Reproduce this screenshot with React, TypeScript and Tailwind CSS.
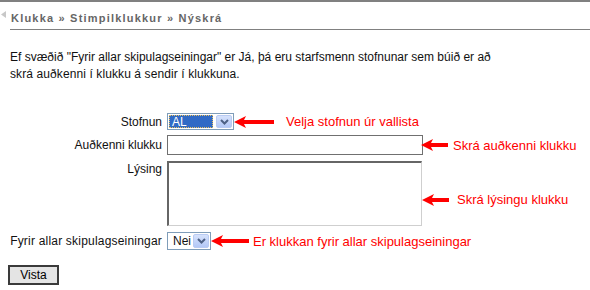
import React from 'react';

const FONT = { fontFamily: '"Liberation Sans", Arial, sans-serif' };

function RedArrow({ width }: { width: number }) {
  return (
    <svg width={width} height={12} viewBox={`0 0 ${width} 12`} className="block shrink-0">
      <polygon points={`0,6 12,0 10,4 ${width},4 ${width},8 10,8 12,12`} fill="#ff0000" />
    </svg>
  );
}

function DropButton() {
  return (
    <div className="flex h-full w-[16px] items-center justify-center rounded-[2px] border border-[#b9cbf3] bg-gradient-to-b from-[#d6e2fc] to-[#b3c8f6]">
      <svg width="9" height="6" viewBox="0 0 9 6">
        <path d="M1 1 L4.5 4.5 L8 1" fill="none" stroke="#4d6185" strokeWidth="2" />
      </svg>
    </div>
  );
}

function Note({ children, ml }: { children: React.ReactNode; ml: string }) {
  return <span className={`${ml} whitespace-nowrap text-[13px] leading-[15px] text-[#ff0000]`}>{children}</span>;
}

export default function App() {
  return (
    <div className="h-[290px] w-[590px] overflow-hidden border-t-2 border-[#808080] bg-white text-[12px] text-[#111]" style={FONT}>
      {/* breadcrumb */}
      <div className="flex">
        <div className="w-[10px] shrink-0 pt-[9px] pl-[1px]">
          <svg width="5" height="7" viewBox="0 0 5 7">
            <polygon points="0,3.5 5,0 5,7" fill="#c8c8c8" />
          </svg>
        </div>
        <div className="flex-1 border-b border-[#808080] pt-[10px] pb-[4px] pl-[1px] text-[11px] font-bold leading-[13px] tracking-[1.2px] text-[#666]">
          Klukka » Stimpilklukkur » Nýskrá
        </div>
      </div>

      <p className="mt-[19px] pl-[10px] leading-[17px]">
        Ef svæðið "Fyrir allar skipulagseiningar" er Já, þá eru starfsmenn stofnunar sem búið er að
        <br />
        <span className="tracking-[0.1px]">skrá auðkenni í klukku á sendir í klukkuna.</span>
      </p>

      <div className="mt-[30px] flex flex-col pl-[10px]">
        {/* Stofnun */}
        <div className="flex h-[17px] items-center">
          <label className="w-[152px] text-right">Stofnun</label>
          <div className="ml-[5px] flex h-[17px] w-[67px] items-center gap-[3px] border border-[#7f9db9] bg-white p-[1px]">
            <div className="flex h-full flex-1 items-center border border-dotted border-[#e8c060] bg-[#316ac5] pl-[2px] text-white">
              AL
            </div>
            <DropButton />
          </div>
          <RedArrow width={40} />
          <Note ml="ml-[12px]">Velja stofnun úr vallista</Note>
        </div>

        {/* Auðkenni klukku */}
        <div className="mt-[5px] flex h-[20px] items-center">
          <label className="w-[152px] text-right">Auðkenni klukku</label>
          <div className="ml-[5px] h-[20px] w-[256px] border border-[#707070] bg-white" />
          <div className="-ml-[2px] flex items-center">
            <RedArrow width={27} />
            <Note ml="ml-[5px]">Skrá auðkenni klukku</Note>
          </div>
        </div>

        {/* Lýsing */}
        <div className="mt-[6px] flex items-start">
          <label className="w-[152px] pt-[1px] text-right leading-[15px]">Lýsing</label>
          <div className="ml-[5px] h-[65px] w-[255px] border-t-2 border-l-2 border-r border-b border-t-[#666] border-l-[#666] border-r-[#cfcfcf] border-b-[#cfcfcf] bg-white" />
          <div className="mt-[31px] flex items-center">
            <RedArrow width={27} />
            <Note ml="ml-[8px]">Skrá lýsingu klukku</Note>
          </div>
        </div>

        {/* Fyrir allar skipulagseiningar */}
        <div className="mt-[6px] flex h-[18px] items-center">
          <label className="w-[152px] text-right tracking-[0.2px]">Fyrir allar skipulagseiningar</label>
          <div className="ml-[5px] flex h-[18px] w-[44px] items-center justify-between border border-[#7f9db9] bg-white p-[1px] pl-[5px]">
            <span>Nei</span>
            <DropButton />
          </div>
          <RedArrow width={38} />
          <Note ml="ml-[4px]">Er klukkan fyrir allar skipulagseiningar</Note>
        </div>

        <button className="mt-[15px] -ml-[2px] h-[20px] w-[51px] border-2 border-[#3a3a3a] bg-[#e4e4e4] text-[12px] leading-none text-black">
          Vista
        </button>
      </div>
    </div>
  );
}
